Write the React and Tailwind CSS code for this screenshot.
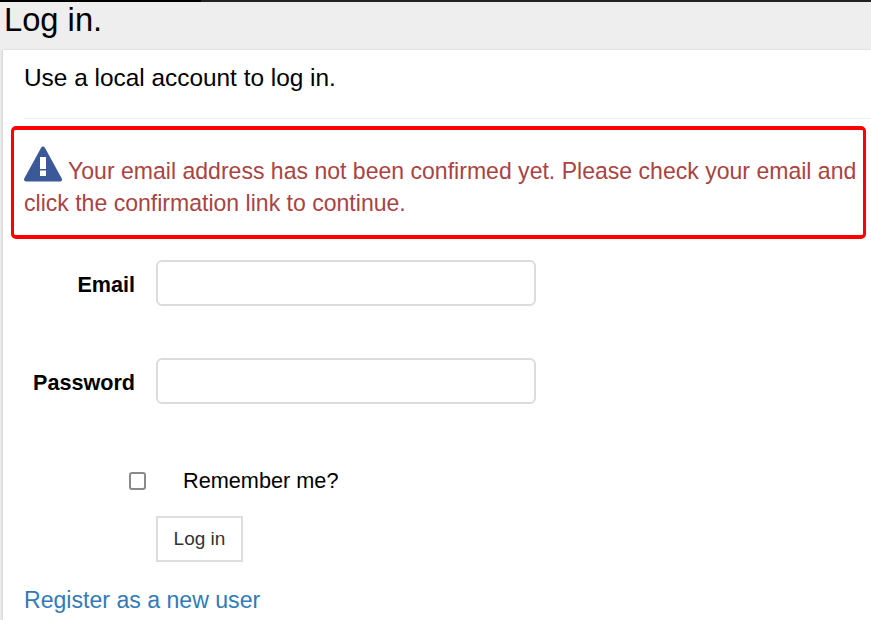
import React from "react";

function WarningIcon() {
  return (
    <svg viewBox="0 0 38 36" className="inline-block align-[-3px] mr-[6px] w-[38px] h-[36px]">
      <path d="M19 2.5 L36 33.5 L2 33.5 Z" fill="#3b5998" stroke="#3b5998" strokeWidth="4" strokeLinejoin="round" />
      <rect x="16" y="11" width="6" height="12" fill="#ffffff" />
      <rect x="16" y="24.5" width="6" height="5.5" fill="#ffffff" />
    </svg>
  );
}

export default function App() {
  return (
    <div className="w-[871px] h-[620px] overflow-hidden bg-[#eeeeee] font-['Liberation_Sans',Arial,sans-serif] text-black">
      <div className="flex h-[2px]">
        <div className="w-[201px] bg-black" />
        <div className="flex-1 bg-[#222222]" />
      </div>
      <h1 className="h-[48px] pl-[4px] text-[32.7px] leading-[36px] font-normal">Log in.</h1>
      <div className="ml-[3px] h-[570px] bg-white shadow-[-1px_0_2px_rgba(0,0,0,0.12)]">
        <div className="ml-[21px] h-[69px] border-b border-[#eeeeee] pt-[13px] text-[24.4px] leading-[30px]">
          Use a local account to log in.
        </div>
        <div className="ml-[8px] mr-[5px] mt-[7px] h-[113px] rounded-[5px] border-[3px] border-t-4 border-b-4 border-[#ff0000] pl-[10px] pr-[4px] pt-[16px] text-[23.05px] leading-[32px] text-[#a94442]">
          <WarningIcon />
          Your email address has not been confirmed yet. Please check your email and click the confirmation link to continue.
        </div>
        <div className="mt-[21px] flex items-center">
          <label className="w-[132px] pt-[3px] text-right text-[21.6px] font-bold leading-[30px]">Email</label>
          <div className="ml-[21px] h-[46px] w-[380px] rounded-[6px] border-2 border-[#dcdcdc] bg-white" />
        </div>
        <div className="mt-[52px] flex items-center">
          <label className="w-[132px] pt-[3px] text-right text-[21.6px] font-bold leading-[30px]">Password</label>
          <div className="ml-[21px] h-[46px] w-[380px] rounded-[6px] border-2 border-[#dcdcdc] bg-white" />
        </div>
        <div className="mt-[61px] flex items-center">
          <div className="ml-[126px] h-[18px] w-[17px] rounded-[3px] border-2 border-[#8a8a8a] bg-white" />
          <span className="ml-[37px] pt-[1px] text-[21.7px] leading-[30px]">Remember me?</span>
        </div>
        <div className="ml-[153px] mt-[20px] flex h-[46px] w-[87px] items-center justify-center border-2 border-[#dddddd] pt-[1px] text-[19px] text-[#333333]">
          Log in
        </div>
        <div className="ml-[21px] mt-[23px] text-[23.1px] leading-[30px] text-[#337ab7]">Register as a new user</div>
      </div>
    </div>
  );
}
